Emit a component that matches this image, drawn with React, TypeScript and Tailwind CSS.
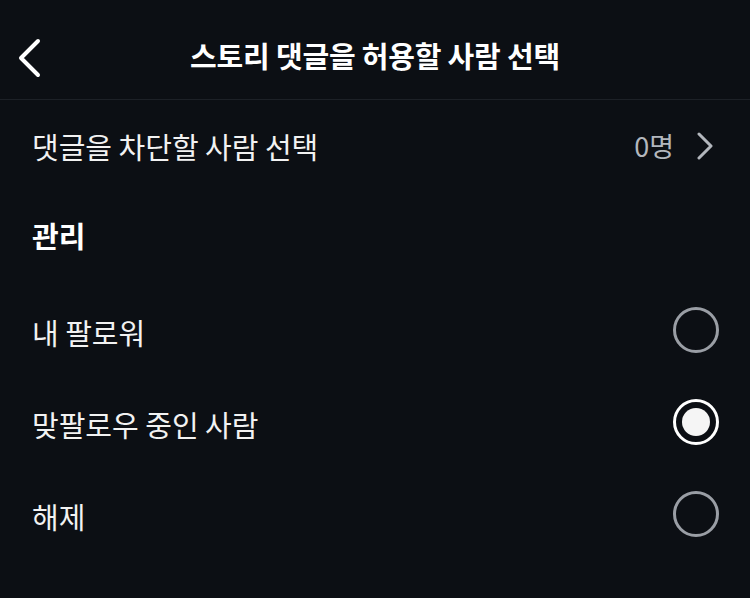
import React, { useState } from "react";

const font = { fontFamily: '"Noto Sans CJK KR", "Noto Sans", sans-serif' };

function Radio({ checked }: { checked: boolean }) {
    if (checked) {
        return (
            <div className="flex h-[46px] w-[46px] items-center justify-center rounded-full border-[3px] border-white">
                <div className="h-[28px] w-[28px] rounded-full bg-[#f5f5f5]" />
            </div>
        );
    }
    return <div className="h-[46px] w-[46px] rounded-full border-[3px] border-[#9a9ea5]" />;
}

export default function App() {
    const [selected, setSelected] = useState(1);
    const options = ["내 팔로워", "맞팔로우 중인 사람", "해제"];

    return (
        <div className="h-[598px] w-[750px] bg-[#0c0f14] text-white" style={font}>
            {/* 헤더 */}
            <div className="relative flex h-[100px] items-center justify-center border-b border-[#1d2127] pt-[12px]">
                <button className="absolute left-[16px] top-[38px]">
                    <svg width="28" height="40" viewBox="0 0 28 40" fill="none">
                        <path d="M22 3 L5 20 L22 37" stroke="white" strokeWidth="4" strokeLinecap="round" strokeLinejoin="round" />
                    </svg>
                </button>
                <div className="text-[29px] font-bold tracking-[-0.2px]">스토리 댓글을 허용할 사람 선택</div>
            </div>

            {/* 차단 */}
            <div className="flex h-[92px] items-center justify-between pl-[32px] pr-[36px]">
                <div className="pt-[2px] text-[29px] text-[#f2f2f2]">댓글을 차단할 사람 선택</div>
                <div className="flex items-center gap-[22px] text-[#b3b7bd]">
                    <span className="text-[27px]">0명</span>
                    <svg width="18" height="28" viewBox="0 0 18 28" fill="none">
                        <path d="M3 2 L15 14 L3 26" stroke="#b3b7bd" strokeWidth="3" strokeLinecap="round" strokeLinejoin="round" />
                    </svg>
                </div>
            </div>

            {/* 관리 */}
            <div className="flex h-[88px] items-center pl-[32px]">
                <div className="text-[29px] font-bold">관리</div>
            </div>

            <div className="mt-[4px] flex flex-col">
                {options.map((label, i) => (
                    <div
                        key={label}
                        onClick={() => setSelected(i)}
                        className="flex h-[92px] cursor-pointer items-center justify-between pl-[32px] pr-[31px]"
                    >
                        <div className="pt-[6px] text-[29px] text-[#f2f2f2]">{label}</div>
                        <Radio checked={selected === i} />
                    </div>
                ))}
            </div>
        </div>
    );
}
